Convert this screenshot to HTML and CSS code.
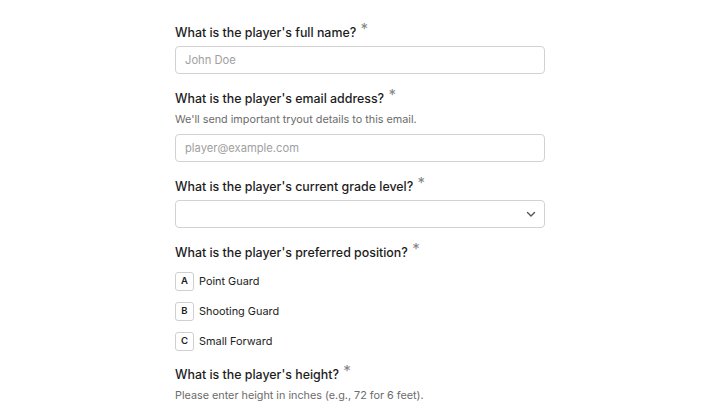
FILE: index.html
```html
<!DOCTYPE html>
<html lang="en">
<head>
  <meta charset="UTF-8">
  <meta name="viewport" content="width=device-width, initial-scale=1.0">
  <title>Player Tryout Registration</title>
  <link rel="stylesheet" href="styles.css">
</head>
<body>

<div class="form-container">
  <form id="tryout">
    <div class="field">
      <label for="nombre">What is the player's full name? <span class="req">*</span></label>
      <input type="text" id="nombre" name="nombre" placeholder="John Doe">
    </div>

    <div class="field">
      <label for="email">What is the player's email address? <span class="req">*</span></label>
      <small>We'll send important tryout details to this email.</small>
      <input type="email" id="email" name="email" placeholder="player@example.com">
    </div>

    <div class="field">
      <label for="grade">What is the player's current grade level? <span class="req">*</span></label>
      <div class="select-wrap">
        <select id="grade" name="grade">
          <option value=""></option>
        </select>
        <svg class="chevron" width="12" height="12" viewBox="0 0 12 12"><path d="M2.5 4.5 L6 8 L9.5 4.5" fill="none" stroke="#555" stroke-width="1.4" stroke-linecap="round" stroke-linejoin="round"/></svg>
      </div>
    </div>

    <div class="field">
      <label>What is the player's preferred position? <span class="req">*</span></label>
      <div class="choice-group">
        <div class="choice"><span class="key">A</span>Point Guard</div>
        <div class="choice"><span class="key">B</span>Shooting Guard</div>
        <div class="choice"><span class="key">C</span>Small Forward</div>
      </div>
    </div>

    <div class="field">
      <label for="height">What is the player's height? <span class="req">*</span></label>
      <small>Please enter height in inches (e.g., 72 for 6 feet).</small>
    </div>
  </form>
</div>

</body>
</html>
```

FILE: styles.css
```css
* {
  box-sizing: border-box;
}
body {
  font-family: Inter, "Noto Sans", sans-serif;
  background-color: #ffffff;
  margin: 0;
  padding: 0;
  color: #1f1f1f;
  overflow: hidden;
}
.form-container {
  width: 370px;
  margin: 0 auto;
  padding-top: 23px;
}
.field {
  display: flex;
  flex-direction: column;
  margin-bottom: 15px;
}
.field:last-child {
  margin-bottom: 0;
}
label {
  font-size: 12.4px;
  font-weight: 500;
  line-height: 20px;
  height: 20px;
  margin-bottom: 2px;
  color: #1c1c1c;
}
.req {
  color: #858585;
  font-size: 15px;
  font-weight: 400;
  line-height: 1;
  position: relative;
  top: -3px;
  margin-left: 1px;
}
small {
  display: block;
  font-size: 10.8px;
  line-height: 18px;
  color: #6b6b6b;
  margin-bottom: 5px;
}
label + input, label + .select-wrap {
  margin-top: 1px;
}
input, select {
  width: 100%;
  height: 28px;
  padding: 0 9px;
  border: 1px solid #d2d2d2;
  border-radius: 4px;
  font-family: inherit;
  font-size: 11.2px;
  color: #1f1f1f;
  background-color: #fff;
}
input::placeholder {
  color: #a0a0a0;
}
.select-wrap {
  position: relative;
}
select {
  appearance: none;
  -webkit-appearance: none;
  display: block;
}
.chevron {
  position: absolute;
  right: 8px;
  top: 8px;
  pointer-events: none;
}
.choice-group {
  display: flex;
  flex-direction: column;
  gap: 10px;
  margin-top: 6px;
  margin-bottom: -1px;
}
.choice {
  display: flex;
  align-items: center;
  gap: 5px;
  height: 20px;
  font-size: 10.9px;
  line-height: 20px;
  color: #222;
}
.key {
  width: 19px;
  height: 19px;
  border: 1px solid #cfcfcf;
  border-radius: 3px;
  display: flex;
  justify-content: center;
  align-items: center;
  font-size: 9.5px;
  font-weight: 600;
  color: #222;
}
```
